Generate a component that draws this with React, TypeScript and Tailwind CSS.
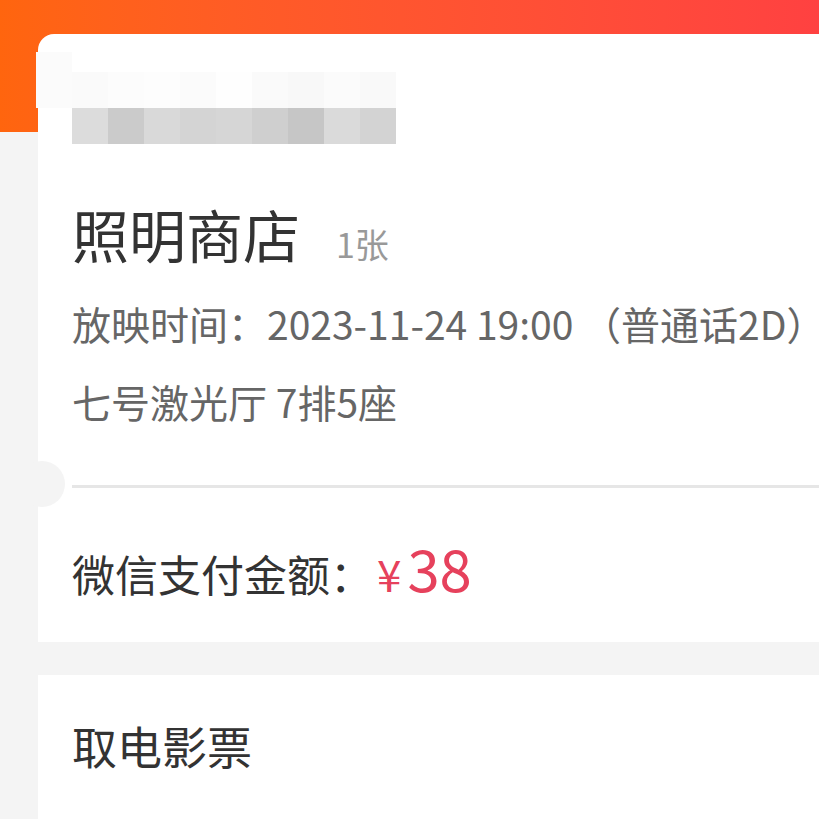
import React from "react";

const top = ["#fafafa", "#fcfcfc", "#fdfdfd", "#fbfbfb", "#fefefe", "#fafafa", "#f8f8f8", "#fbfbfb", "#f9f9f9"];
const bottom = ["#dcdcdc", "#cbcbcb", "#d9d9d9", "#d4d4d4", "#d6d6d6", "#cfcfcf", "#c6c6c6", "#dadada", "#d3d3d3"];

export default function App() {
  return (
    <div
      className="w-[819px] h-[819px] overflow-hidden bg-[#f4f4f4]"
      style={{ fontFamily: '"Noto Sans CJK SC", "Noto Sans", sans-serif' }}
    >
      <div className="h-[132px] bg-gradient-to-r from-[#ff650e] to-[#ff4141]" />
      <div className="relative mt-[-98px] ml-[38px] w-[819px] rounded-tl-[16px] rounded-tr-[16px] bg-white pl-[34px] pt-[38px] pb-[46px]">
        <div className="absolute left-[-2px] top-[18px] h-[56px] w-[36px] bg-[#fbfbfb]" />
        <div className="absolute left-[-19px] top-[427px] h-[46px] w-[46px] rounded-full bg-[#f4f4f4]" />
        <div className="flex flex-col">
          <div className="flex">
            {top.map((c, i) => (
              <div key={i} className="h-[36px] w-[36px]" style={{ backgroundColor: c }} />
            ))}
          </div>
          <div className="flex">
            {bottom.map((c, i) => (
              <div key={i} className="h-[36px] w-[36px]" style={{ backgroundColor: c }} />
            ))}
          </div>
        </div>
        <div className="mt-[61px] flex items-baseline leading-none">
          <span className="text-[57px] text-[#333333]">照明商店</span>
          <span className="ml-[36px] text-[34px] text-[#999999]">1张</span>
        </div>
        <div className="mt-[42px] whitespace-nowrap text-[39px] leading-none text-[#666666]">
          放映时间：2023-11-24 19:00 （普通话2D）
        </div>
        <div className="mt-[39px] whitespace-nowrap text-[39px] leading-none text-[#666666]">
          七号激光厅 7排5座
        </div>
        <div className="mt-[64px] h-[3px] bg-[#e6e6e6]" />
        <div className="mt-[50px] flex items-baseline leading-none">
          <span className="text-[43px] text-[#333333]">微信支付金额：</span>
          <span className="ml-[4px] text-[44px] text-[#e6415c]">¥</span>
          <span className="ml-[6px] text-[58px] text-[#e6415c]">38</span>
        </div>
      </div>
      <div className="mt-[33px] ml-[38px] h-[200px] bg-white pl-[34px] pt-[48px]">
        <div className="text-[45px] leading-none text-[#333333]">取电影票</div>
      </div>
    </div>
  );
}
